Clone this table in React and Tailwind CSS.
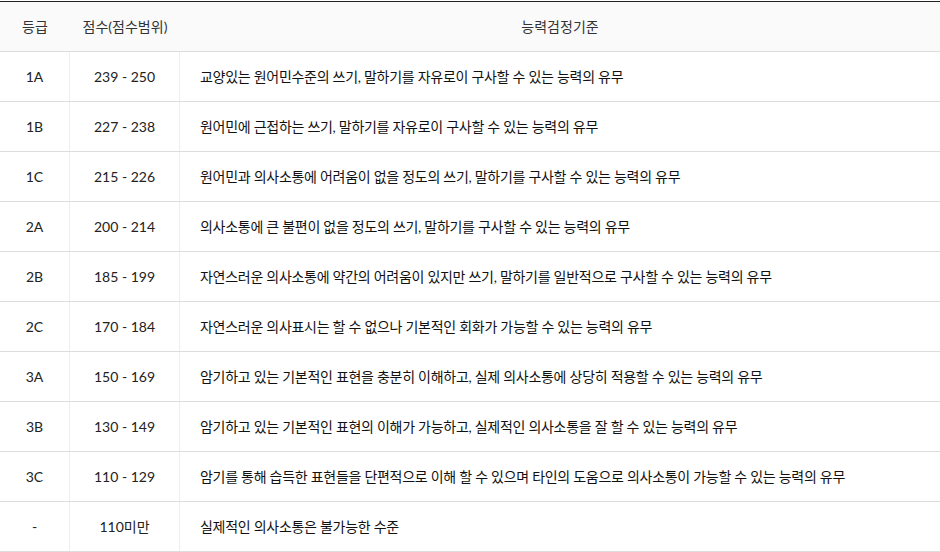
import React from 'react'

const rows = [
    ['1A', '239 - 250', '교양있는 원어민수준의 쓰기, 말하기를 자유로이 구사할 수 있는 능력의 유무'],
    ['1B', '227 - 238', '원어민에 근접하는 쓰기, 말하기를 자유로이 구사할 수 있는 능력의 유무'],
    ['1C', '215 - 226', '원어민과 의사소통에 어려움이 없을 정도의 쓰기, 말하기를 구사할 수 있는 능력의 유무'],
    ['2A', '200 - 214', '의사소통에 큰 불편이 없을 정도의 쓰기, 말하기를 구사할 수 있는 능력의 유무'],
    ['2B', '185 - 199', '자연스러운 의사소통에 약간의 어려움이 있지만 쓰기, 말하기를 일반적으로 구사할 수 있는 능력의 유무'],
    ['2C', '170 - 184', '자연스러운 의사표시는 할 수 없으나 기본적인 회화가 가능할 수 있는 능력의 유무'],
    ['3A', '150 - 169', '암기하고 있는 기본적인 표현을 충분히 이해하고, 실제 의사소통에 상당히 적용할 수 있는 능력의 유무'],
    ['3B', '130 - 149', '암기하고 있는 기본적인 표현의 이해가 가능하고, 실제적인 의사소통을 잘 할 수 있는 능력의 유무'],
    ['3C', '110 - 129', '암기를 통해 습득한 표현들을 단편적으로 이해 할 수 있으며 타인의 도움으로 의사소통이 가능할 수 있는 능력의 유무'],
    ['-', '110미만', '실제적인 의사소통은 불가능한 수준'],
]

export default function App(){
    return (
        <div className="w-[940px] bg-white text-[14px] text-[#222] font-['Lato','Noto_Sans_CJK_KR',sans-serif]">
            <div className="mt-px border-t border-[#222]">
                {/* header */}
                <div className="grid grid-cols-[70px_110px_1fr] h-[50px] items-center bg-[#fafafa] border-b border-[#ddd] text-[#333]">
                    <div className="text-center">등급</div>
                    <div className="text-center">점수(점수범위)</div>
                    <div className="text-center">능력검정기준</div>
                </div>
                {rows.map(r => (
                    <div key={r[0]} className="grid grid-cols-[70px_110px_1fr] h-[50px] border-b border-[#ddd]">
                        <div className="flex items-center justify-center border-r border-[#eee]">{r[0]}</div>
                        <div className="flex items-center justify-center border-r border-[#eee]">{r[1]}</div>
                        <div className="flex items-center pl-5 text-[#111] tracking-[-0.02em]">{r[2]}</div>
                    </div>
                ))}
            </div>
        </div>
    )
}
